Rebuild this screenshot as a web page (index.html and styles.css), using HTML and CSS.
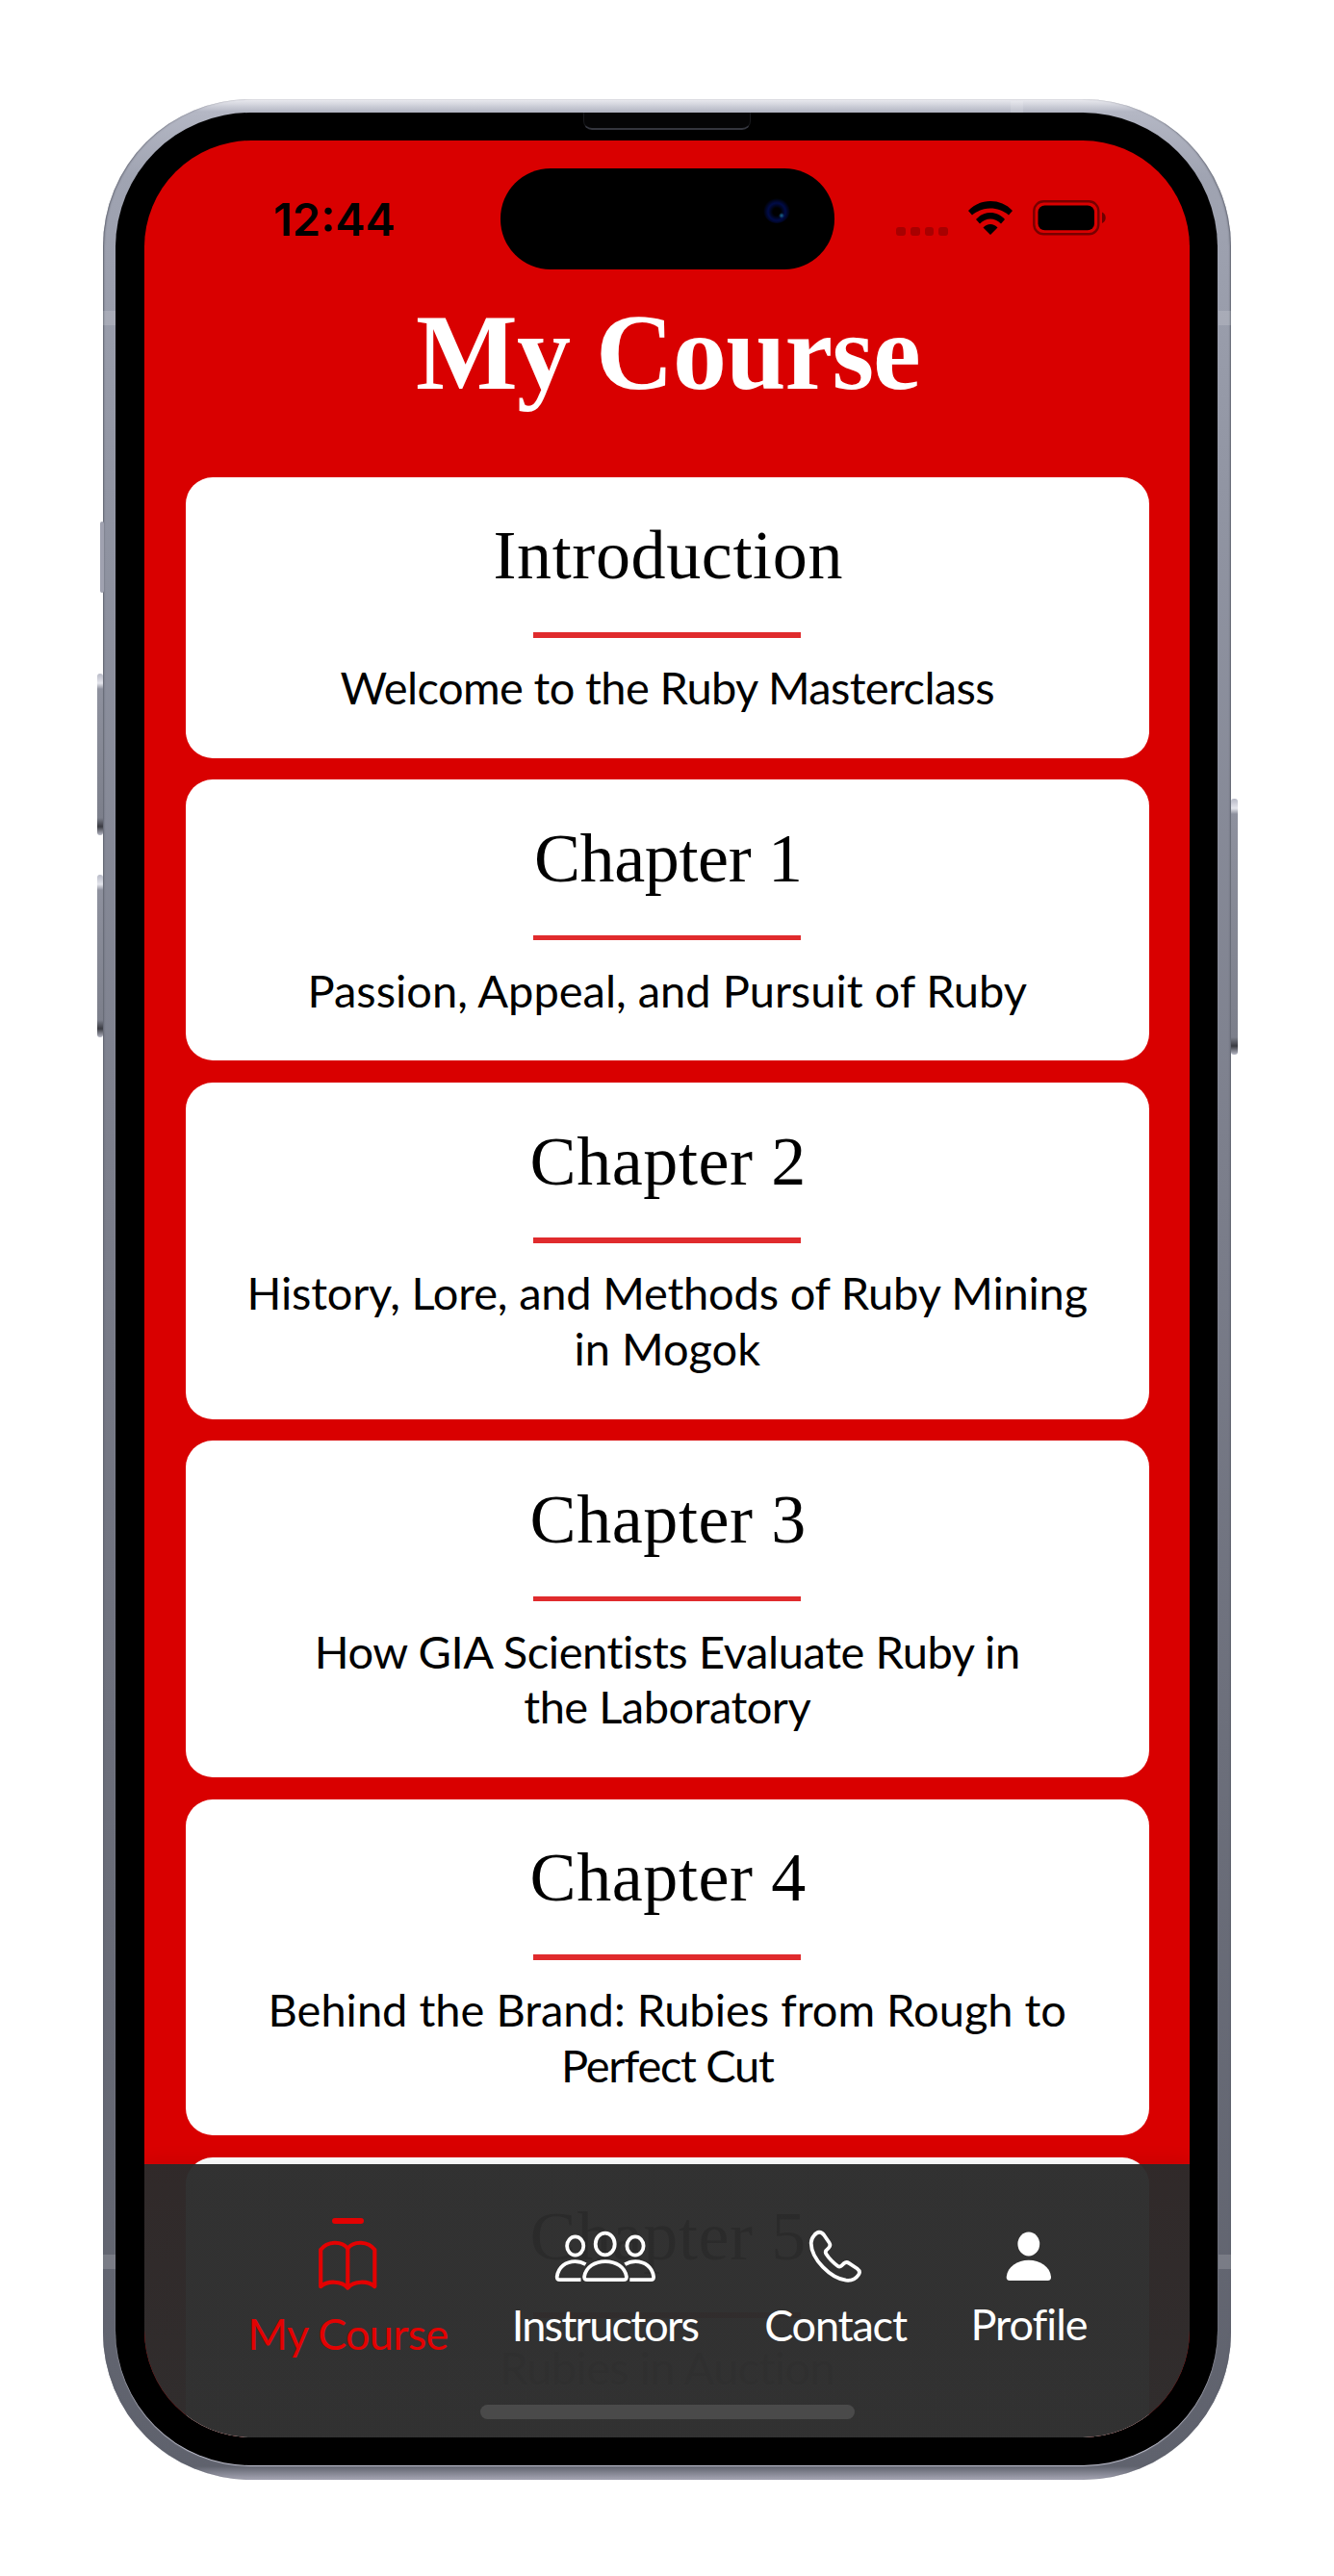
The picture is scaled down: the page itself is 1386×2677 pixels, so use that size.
FILE: index.html
```html
<!DOCTYPE html>
<html lang="en">
<head>
<meta charset="utf-8">
<title>My Course</title>
<link rel="stylesheet" href="styles.css">
</head>
<body>
<div class="phone">
  <i class="key key-action"></i>
  <i class="key key-up"></i>
  <i class="key key-down"></i>
  <i class="key key-power"></i>
  <i class="antenna antenna-tl"></i>
  <i class="antenna antenna-tr"></i>
  <i class="antenna antenna-bl"></i>
  <i class="antenna antenna-br"></i>
  <i class="antenna antenna-top"></i>
  <div class="bezel">
    <i class="speaker"></i>
    <div class="screen">
      <div class="status">
        <span class="time">12:44</span>
        <div class="status-icons">
          <div class="dots"><i></i><i></i><i></i><i></i></div>
          <svg class="wifi" viewBox="0 0 46 35" width="46" height="35"><path d="M0 10C12-3.3 34-3.3 46 10L42 14.5C31 5.2 15 5.2 4 14.5ZM8 19C16 9.7 30 9.7 38 19L34 23.5C27 16.8 19 16.8 12 23.5ZM15.5 27.5C19.5 22.8 26.5 22.8 30.5 27.5L23 35Z"/></svg>
          <svg class="battery" viewBox="0 0 76 37" width="76" height="37"><rect x="1.3" y="1.3" width="67" height="34" rx="10" fill="none" stroke="#000" stroke-opacity=".45" stroke-width="2.4"/><rect x="5.5" y="5.5" width="58.5" height="25.8" rx="7"/><path d="M72 12.5Q75.7 14 75.7 18.3T72 24Z" fill-opacity=".5"/></svg>
        </div>
      </div>
      <div class="island"><i class="camera"></i></div>
      <h1>My Course</h1>
      <main class="cards">
        <section class="card"><h2 class="intro">Introduction</h2><hr><p><span class="t66">Welcome to the Ruby Masterclass</span></p></section>
        <section class="card"><h2 class="one">Chapter 1</h2><hr><p><span>Passion, Appeal, and Pursuit of Ruby</span></p></section>
        <section class="card"><h2>Chapter 2</h2><hr><p><span class="t20">History, Lore, and Methods of Ruby Mining</span> <span>in Mogok</span></p></section>
        <section class="card"><h2>Chapter 3</h2><hr><p><span class="t40">How GIA Scientists Evaluate Ruby in</span> <span class="t50">the Laboratory</span></p></section>
        <section class="card"><h2>Chapter 4</h2><hr><p><span>Behind the Brand: Rubies from Rough to</span> <span class="t130">Perfect Cut</span></p></section>
        <section class="card"><h2>Chapter 5</h2><hr><p class="faint"><span class="t66">Rubies in Auction</span></p></section>
      </main>
      <nav class="tabs">
        <a class="tab tab-course">
          <i class="marker"></i>
          <svg viewBox="240 127 63 55" width="63" height="55"><path d="M271.3 136.5C265 128.6 250 128.6 243.2 138V176.2C250 170 265 170 271.3 177.6C277.5 170 292.5 170 299.3 176.2V138C292.5 128.6 277.5 128.6 271.3 136.5V177.6"/></svg>
          <span>My Course</span>
        </a>
        <a class="tab tab-instructors">
          <svg viewBox="16 27 105 56" width="105" height="56"><ellipse cx="68.7" cy="42" rx="10" ry="11.4"/><ellipse cx="37.7" cy="44" rx="8.6" ry="9.7"/><ellipse cx="100" cy="44" rx="8.6" ry="9.7"/><path d="M50 79.2H88Q91 79.2 90.9 76C89.5 66 80 60.1 69 60.1S48.5 66 47.1 76Q47 79.2 50 79.2Z"/><path d="M43.5 79.2H21.5Q18.6 79.2 18.7 76C20 66 28 60.1 37.5 60.1Q43.5 60.1 48.5 63.2"/><path d="M94.3 79.2H116.3Q119.2 79.2 119.1 76C117.8 66 109.8 60.1 100.3 60.1Q94.3 60.1 89.3 63.2"/></svg>
          <span>Instructors</span>
        </a>
        <a class="tab tab-contact">
          <svg viewBox="279 26 56 57" width="56" height="57"><path d="M285 33C288 29 292 28.5 295 32.5L300.5 40.5Q302.5 43.5 300 46L297.5 48.5Q296 50.5 297.5 52.5C301 58 305.5 62 309.5 65Q311.5 66.3 313.5 64.3L316 62Q318.3 60 321 61.8L329.5 67.5Q333.5 70.5 331 74C328 78.5 323.5 80.3 318 79.7C302 77.5 282 58 281.7 41Q281.8 36.5 285 33Z"/></svg>
          <span>Contact</span>
        </a>
        <a class="tab tab-profile">
          <svg viewBox="174 119 48 52" width="48" height="52"><ellipse cx="197.8" cy="132" rx="11.4" ry="12.4"/><path d="M178 170H217.6Q221.2 170 221 166C220 155.5 209.5 148.8 197.8 148.8S175.8 155.5 174.7 166Q174.5 170 178 170Z"/></svg>
          <span>Profile</span>
        </a>
        <i class="home"></i>
      </nav>
    </div>
  </div>
</div>
</body>
</html>
```
FILE: styles.css
```css
* { box-sizing: border-box; margin: 0; padding: 0; }

body {
  height: 2677px;
  padding: 103px 107px 0;
  background: #fff;
  overflow: hidden;
}

/* Device shell */
.phone {
  position: relative;
  width: 1172px;
  height: 2474px;
  padding: 14px 14px 15px 13px;
  border-radius: 153px;
  background: linear-gradient(#ececf1 0, #b4b7c4 13px, #a0a4b2 80px, #9195a3 400px, #7c7f8c 1100px, #6c6f7b 1700px, #5f626d 2460px, #a6a6b4 2474px);
  box-shadow: inset 2px 0 2px -1px #60636f, inset -2px 0 2px -1px #60636f;
}
.bezel {
  position: relative;
  height: 2445px;
  padding: 29px 29px 29px 30px;
  border-radius: 140px;
  background: #000;
  box-shadow: 0 1px 1px #c5c6d4;
}
.speaker {
  position: absolute;
  left: 486px;
  top: 0;
  width: 174px;
  height: 18px;
  border: solid #18191d;
  border-width: 0 1px 2px;
  border-bottom-color: #34363e;
  border-radius: 0 0 9px 9px;
  background: #050506;
}
.key {
  position: absolute;
  border-radius: 3px;
  background: linear-gradient(#b7b9c6 0, #e4e5ec 10px, #8e919e 16px, #7c7f8b calc(100% - 18px), #3a3b42 calc(100% - 9px), #b7b9c6 100%);
}
.key-action { left: -3px; top: 439px; width: 4px; height: 74px; background: #a0a2b0; }
.key-up { left: -6px; top: 597px; width: 6px; height: 168px; }
.key-down { left: -6px; top: 806px; width: 6px; height: 169px; }
.key-power { left: 1172px; top: 727px; width: 7px; height: 266px; }
.antenna { position: absolute; width: 13px; height: 15px; background: rgba(255, 255, 255, .15); }
.antenna-tl { left: 0; top: 220px; }
.antenna-tr { right: 0; top: 220px; }
.antenna-bl { left: 0; top: 2240px; }
.antenna-br { right: 0; top: 2240px; }
.antenna-top { left: 943px; top: 2px; height: 12px; }

/* Screen */
.screen {
  position: relative;
  height: 2387px;
  border-radius: 111px;
  background: #d90000;
  overflow: hidden;
}
.status {
  display: flex;
  justify-content: space-between;
  height: 157.5px;
  padding: 52.7px 87.5px 0 134px;
}
.time { font: 600 47px/57px Inter, sans-serif; }
.status-icons { display: flex; height: 37px; margin-top: 9.5px; }
.dots { display: flex; align-items: flex-end; gap: 5px; margin-right: 20.5px; }
.dots i { width: 9.7px; height: 9.5px; border-radius: 3px; background: #a80000; }
.wifi { margin: 1px 21px 0 0; }
.island {
  position: absolute;
  left: 370px;
  top: 29.3px;
  width: 346.5px;
  height: 104.3px;
  border-radius: 52px;
  background: #000;
}
.camera {
  position: absolute;
  left: 273px;
  top: 29px;
  width: 28px;
  height: 28px;
  border-radius: 50%;
  background: radial-gradient(circle 3px at 19px 20px, #1c6a96, transparent), radial-gradient(circle at 14px 16px, #000 4px, #000b48 9px, #000 14px);
}
h1 {
  margin-bottom: 68.4px;
  padding-left: 2px;
  color: #fff;
  font: 700 112px/124px "Liberation Serif", serif;
  letter-spacing: -.9px;
  text-align: center;
}
.cards {
  display: flex;
  flex-direction: column;
  gap: 22.7px;
  padding: 0 42px 0 42.5px;
}
.card {
  flex: none;
  padding: 41.5px 0 45.4px;
  border-radius: 28px;
  background: #fff;
  text-align: center;
}
h2 {
  padding-left: 2px;
  font: 400 72px/80px "Liberation Serif", serif;
  letter-spacing: .6px;
}
.one { letter-spacing: -.36px; }
.intro { letter-spacing: .64px; }
hr {
  width: 278px;
  height: 5.6px;
  margin: 39.8px auto 23.3px;
  border: 0;
  background: #e02b2d;
}
p { margin-bottom: -1.5px; font: 400 47px/57.8px Lato, sans-serif; }
p span { display: block; white-space: nowrap; }
.faint { color: #999; }
.t20 { letter-spacing: -.2px; }
.t40 { letter-spacing: -.39px; }
.t50 { letter-spacing: -.5px; }
.t66 { letter-spacing: -.62px; }
.t130 { letter-spacing: -1.3px; }

/* Tab bar */
.tabs {
  position: absolute;
  left: 0;
  right: 0;
  bottom: 0;
  display: flex;
  gap: 69.5px;
  height: 284px;
  padding-left: 108.5px;
  background: linear-gradient(rgba(43, 43, 43, .968), rgba(46, 46, 46, .985));
  box-shadow: 0 0 20px rgba(0, 0, 0, .1);
}
.tab {
  display: flex;
  flex: none;
  flex-direction: column;
  align-items: center;
  color: #fff;
  font: 400 45px/54px Lato, sans-serif;
  white-space: nowrap;
}
.tab svg { flex: none; margin-bottom: 15.5px; fill: none; stroke: currentColor; stroke-width: 3.8; stroke-linejoin: round; }
.tab-course { width: 206px; padding-top: 56px; color: #e30202; letter-spacing: -.7px; }
.tab-course svg { stroke-width: 4.2; }
.marker { flex: none; width: 33px; height: 6px; margin-bottom: 16px; border-radius: 3px; background: #e30202; }
.tab-instructors { width: 189px; margin-right: 2px; padding-top: 68px; letter-spacing: -1.8px; }
.tab-contact { width: 147px; padding-top: 67px; letter-spacing: -1.2px; }
.tab-profile { width: 116px; padding-top: 70px; letter-spacing: -1px; }
.tab-profile svg { margin-bottom: 16.5px; fill: currentColor; stroke: none; }
.home {
  position: absolute;
  left: 349px;
  bottom: 19px;
  width: 389px;
  height: 15px;
  border-radius: 8px;
  background: #4a4a4a;
}
```
